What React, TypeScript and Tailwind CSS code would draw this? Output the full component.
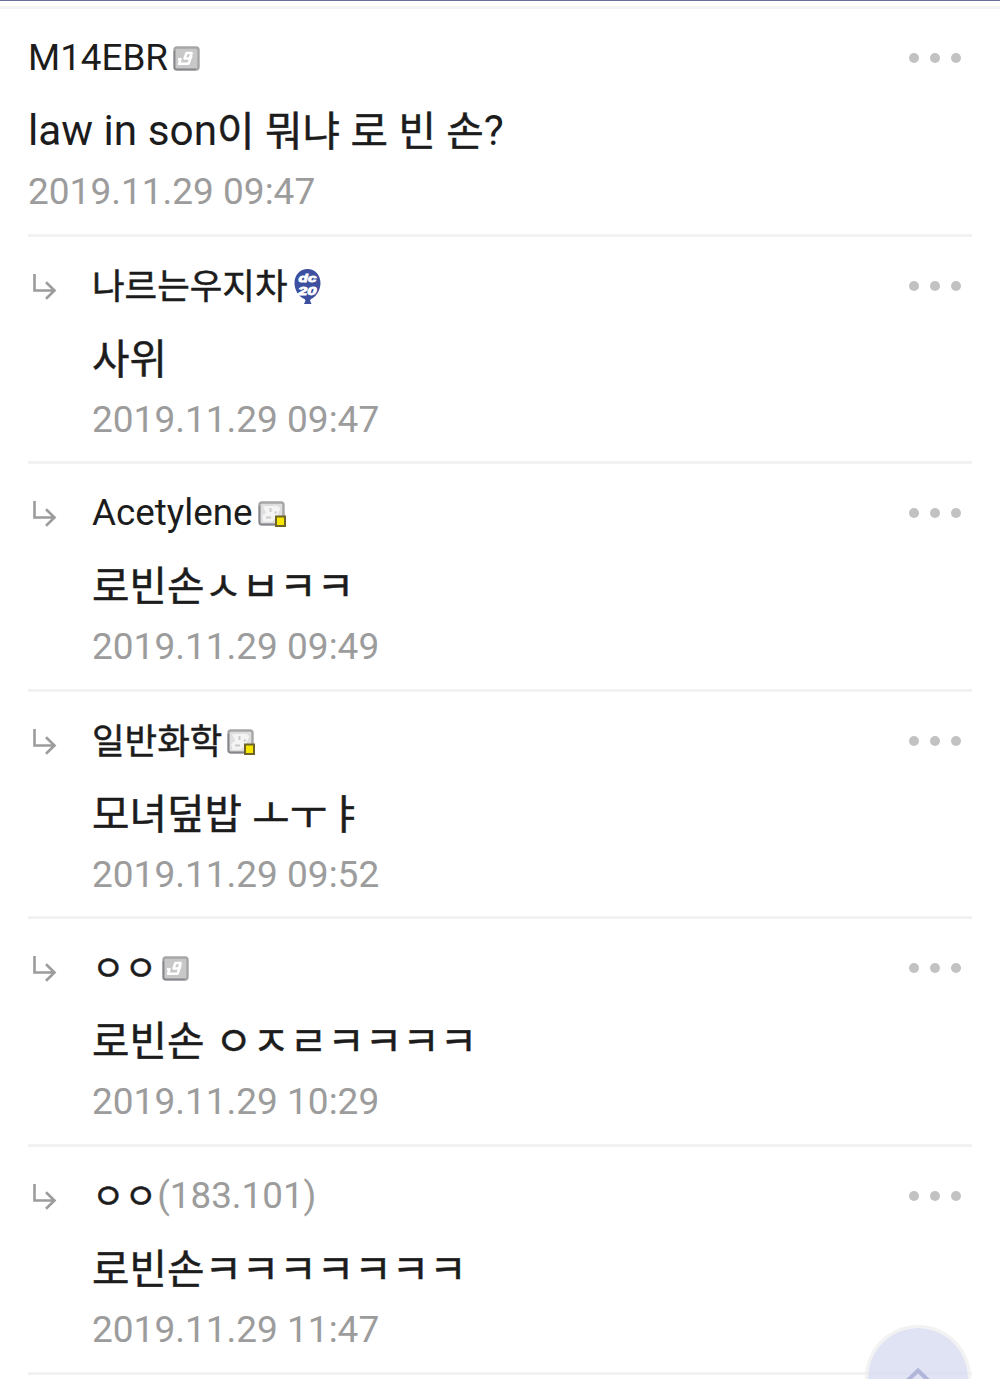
import React from "react";

interface Comment {
  name: string;
  ip?: string;
  badge?: "gonick" | "half" | "balloon";
  text: string;
  date: string;
  reply?: boolean;
}

const comments: Comment[] = [
  { name: "M14EBR", badge: "gonick", text: "law in son이 뭐냐 로 빈 손?", date: "2019.11.29 09:47" },
  { name: "나르는우지차", badge: "balloon", text: "사위", date: "2019.11.29 09:47", reply: true },
  { name: "Acetylene", badge: "half", text: "로빈손ㅅㅂㅋㅋ", date: "2019.11.29 09:49", reply: true },
  { name: "일반화학", badge: "half", text: "모녀덮밥 ㅗㅜㅑ", date: "2019.11.29 09:52", reply: true },
  { name: "ㅇㅇ", badge: "gonick", text: "로빈손 ㅇㅈㄹㅋㅋㅋㅋ", date: "2019.11.29 10:29", reply: true },
  { name: "ㅇㅇ", ip: "(183.101)", text: "로빈손ㅋㅋㅋㅋㅋㅋㅋ", date: "2019.11.29 11:47", reply: true },
];

// Hangul is set slightly smaller and heavier than the latin text around it
function MixedText({ text }: { text: string }) {
  return (
    <>
      {text.split(/([ㄱ-ㅣ가-힣]+)/).map((part, i) =>
        i % 2 === 1 ? (
          <span key={i} className="relative top-px text-[0.963em] [-webkit-text-stroke:0.5px]">
            {part}
          </span>
        ) : (
          part
        )
      )}
    </>
  );
}

function NickBadge({ half }: { half?: boolean }) {
  return (
    <svg width="29" height="27" viewBox="0 0 29 27" className="ml-[5px] mt-[3px] shrink-0">
      <rect x="1.5" y="1.5" width="24" height="22" rx="2.5" fill={half ? "#dedede" : "#c8c8c8"} stroke="#a6a6a6" strokeWidth="2.4" />
      <path d="M1.4 5v16.5q0 2 2 2h19.5" fill="none" stroke="#85858b" strokeWidth="1.4" />
      {half ? (
        <path
          d="M6 6l13-.5 2.500 2-4 9-4 3.500H6l-1-5 4-3z"
          fill="#f4f4f4"
          stroke="#f4f4f4"
          strokeWidth="1.5"
          strokeLinejoin="round"
        />
      ) : (
        <path
          d="M19.500 7h-6l-2 5.500h5l2.500-5.500M18.500 9.500l-3 8.300h-4M5 13.300h2.500l-1.500 4.500h6"
          fill="none"
          stroke="#fff"
          strokeWidth="2.500"
          strokeLinejoin="round"
        />
      )}
      {half && (
        <>
          <path d="M12.500 7v4M18.500 10.500l-1.500 2M8 16.500h5" stroke="#c9c9c9" strokeWidth="1.8" />
          <rect x="18" y="15.500" width="9" height="9.500" fill="#f7e600" stroke="#6f6427" strokeWidth="2" />
        </>
      )}
    </svg>
  );
}

function BalloonBadge() {
  return (
    <svg width="27" height="36" viewBox="0 0 27 36" className="ml-[6px] mt-[2px] shrink-0">
      <path
        d="M13.500 0C21 0 26.500 6 26.500 14c0 7-4 13.500-9.500 16l-1 1.500 1.500 3.500h-7.500l1.500-3.500-1-1.500C4.500 27.500.5 21 .5 14 .5 6 6 0 13.500 0Z"
        fill="#3d4f9f"
      />
      <g
        fill="#fff"
        stroke="#fff"
        strokeWidth="0.8"
        className="font-['Liberation_Sans',sans-serif] text-[11px] font-bold italic"
      >
        <text x="4.500" y="12.500" textLength="18" lengthAdjust="spacingAndGlyphs">
          dc
        </text>
        <text x="4" y="26" textLength="18.500" lengthAdjust="spacingAndGlyphs">
          20
        </text>
      </g>
    </svg>
  );
}

function ReplyArrow() {
  return (
    <svg width="25" height="26" viewBox="0 0 25 26" fill="none" stroke="#9c9c9c" strokeWidth="2.6" className="mt-[8px]">
      <path d="M1.500 0v16.500h20M13 8.300l8.500 8.200-8.500 8.200" />
    </svg>
  );
}

function CommentRow({ comment }: { comment: Comment }) {
  return (
    <li className="mx-7 flex h-[227.6px] border-b-[3px] border-[#f2f2f2] pt-[29px]">
      {comment.reply && (
        <div className="w-16 shrink-0 pl-[5px]">
          <ReplyArrow />
        </div>
      )}
      <div className="min-w-0 flex-1 whitespace-nowrap">
        <div className="flex h-10 items-center text-[36.8px] leading-[40px] text-[#1c1c1c]">
          <span>
            <MixedText text={comment.name} />
          </span>
          {comment.ip && <span className="text-[#9c9c9c]">{comment.ip}</span>}
          {comment.badge === "balloon" && <BalloonBadge />}
          {comment.badge === "gonick" && <NickBadge />}
          {comment.badge === "half" && <NickBadge half />}
        </div>
        <p className="mt-[29px] h-12 text-[42.3px] leading-[48px] text-[#1c1c1c]">
          <MixedText text={comment.text} />
        </p>
        <p className="mt-[17px] text-[37px] leading-[40px] text-[#9c9c9c]">{comment.date}</p>
      </div>
      <button aria-label="menu" className="mr-[11px] mt-[15px] flex h-[10px] gap-[11px]">
        <span className="size-[10px] rounded-full bg-[#c2c2c2]" />
        <span className="size-[10px] rounded-full bg-[#c2c2c2]" />
        <span className="size-[10px] rounded-full bg-[#c2c2c2]" />
      </button>
    </li>
  );
}

export default function App() {
  return (
    <div className="relative h-[1379px] w-[1000px] overflow-hidden bg-white font-[Roboto,'Noto_Sans_CJK_KR',sans-serif]">
      <div className="h-[9px] border-b-[3px] border-t border-b-[#f3f3f3] border-t-[#6b6f9c]" />
      <ul>
        {comments.map((comment, i) => (
          <CommentRow key={i} comment={comment} />
        ))}
      </ul>

      {/* scroll to top */}
      <button
        aria-label="top"
        className="absolute left-[865px] top-[1325px] flex size-[106px] justify-center rounded-full border-[3px] border-[#efefef]/80 bg-[#d6daf0]/75 bg-clip-padding pt-[39px]"
      >
        <svg width="36" height="22" viewBox="0 0 36 22" fill="none" stroke="#b0b5d9" strokeWidth="4">
          <path d="M3 18 18 3.500 33 18" />
        </svg>
      </button>
    </div>
  );
}
